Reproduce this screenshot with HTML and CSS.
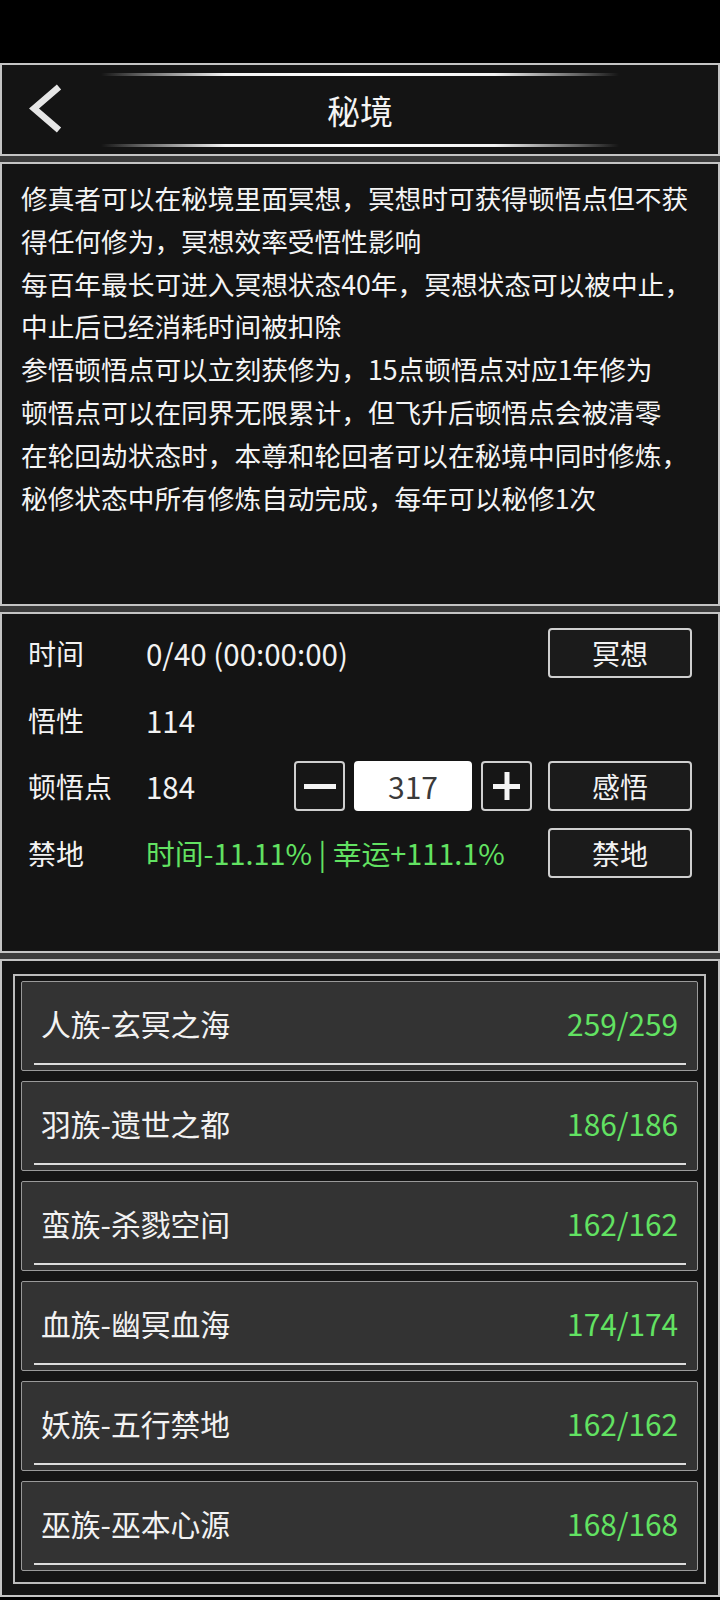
FILE: index.html
```html
<!DOCTYPE html>
<html lang="zh-CN">
<head>
<meta charset="utf-8">
<title>秘境</title>
<link rel="stylesheet" href="styles.css">
</head>
<body>
<div class="topbar"></div>
<div class="stack">
  <header class="panel header">
    <div class="deco"></div>
    <div class="title-row">
      <div class="back">
        <svg width="40" height="54" viewBox="0 0 40 54"><polyline points="30,4 5,25.5 30,47" fill="none" stroke="#e6e6e6" stroke-width="6.5" stroke-linejoin="miter"/></svg>
      </div>
      <div class="title">秘境</div>
      <div></div>
    </div>
    <div class="deco"></div>
  </header>

  <section class="panel intro">
    <p>修真者可以在秘境里面冥想，冥想时可获得顿悟点但不获得任何修为，冥想效率受悟性影响</p>
    <p>每百年最长可进入冥想状态40年，冥想状态可以被中止，中止后已经消耗时间被扣除</p>
    <p>参悟顿悟点可以立刻获修为，15点顿悟点对应1年修为</p>
    <p>顿悟点可以在同界无限累计，但飞升后顿悟点会被清零</p>
    <p>在轮回劫状态时，本尊和轮回者可以在秘境中同时修炼，秘修状态中所有修炼自动完成，每年可以秘修1次</p>
  </section>

  <section class="panel stats">
    <div class="row">
      <span class="label">时间</span>
      <span class="value">0/40 (00:00:00)</span>
      <button class="btn">冥想</button>
    </div>
    <div class="row">
      <span class="label">悟性</span>
      <span class="value">114</span>
    </div>
    <div class="row">
      <span class="label">顿悟点</span>
      <span class="value">184</span>
      <div class="stepper">
        <button class="step minus" aria-label="减少"><span class="bar-h"></span></button>
        <div class="num">317</div>
        <button class="step plus" aria-label="增加"><span class="bar-h"></span><span class="bar-v"></span></button>
      </div>
      <button class="btn">感悟</button>
    </div>
    <div class="row">
      <span class="label">禁地</span>
      <span class="value green">时间-11.11% | 幸运+111.1%</span>
      <button class="btn">禁地</button>
    </div>
  </section>

  <section class="panel realms">
    <div class="frame">
      <div class="item"><div class="item-row"><span>人族-玄冥之海</span><span class="count">259/259</span></div><div class="uline"></div></div>
      <div class="item"><div class="item-row"><span>羽族-遗世之都</span><span class="count">186/186</span></div><div class="uline"></div></div>
      <div class="item"><div class="item-row"><span>蛮族-杀戮空间</span><span class="count">162/162</span></div><div class="uline"></div></div>
      <div class="item"><div class="item-row"><span>血族-幽冥血海</span><span class="count">174/174</span></div><div class="uline"></div></div>
      <div class="item"><div class="item-row"><span>妖族-五行禁地</span><span class="count">162/162</span></div><div class="uline"></div></div>
      <div class="item"><div class="item-row"><span>巫族-巫本心源</span><span class="count">168/168</span></div><div class="uline"></div></div>
    </div>
  </section>
</div>
</body>
</html>
```

FILE: styles.css
```css
* { box-sizing: border-box; }

html, body {
  margin: 0;
  padding: 0;
  background: #000;
}

body {
  width: 720px;
  font-family: "Noto Sans CJK SC", "Noto Sans", sans-serif;
  color: #f2f2f2;
}

.topbar {
  height: 63px;
  background: #000;
}

.stack {
  display: flex;
  flex-direction: column;
  gap: 6px;
  background: #3b3b3b;
}

.panel {
  border: 2px solid #c4c4c4;
  background: #141414;
}

/* header */
.header {
  height: 93px;
  display: flex;
  flex-direction: column;
  align-items: center;
  padding: 8px 0 7px;
}

.deco {
  width: 518px;
  height: 3px;
  flex: none;
  background: linear-gradient(90deg,
    rgba(255,255,255,0) 0%,
    rgba(255,255,255,0.35) 8%,
    rgba(255,255,255,0.95) 24%,
    #ffffff 50%,
    rgba(255,255,255,0.95) 76%,
    rgba(255,255,255,0.35) 92%,
    rgba(255,255,255,0) 100%);
}

.title-row {
  flex: 1;
  width: 100%;
  display: grid;
  grid-template-columns: 1fr auto 1fr;
  align-items: center;
}

.back {
  padding-left: 27px;
  display: flex;
  align-items: center;
}

.back svg { display: block; }

.title {
  font-size: 33px;
  line-height: 1;
  color: #f4f4f4;
}

/* intro text */
.intro {
  height: 444px;
  padding: 13px 16px 0 19px;
}

.intro p {
  margin: 0;
  font-size: 26.7px;
  line-height: 42.8px;
  color: #f4f4f4;
}

/* stats */
.stats {
  height: 341px;
  padding: 14px 26px 0 26px;
  display: flex;
  flex-direction: column;
  gap: 16.5px;
}

.row {
  height: 50px;
  display: flex;
  align-items: center;
  font-size: 28px;
}

.label {
  width: 118px;
  flex: none;
  color: #f2f2f2;
}

.value {
  flex: 1;
  font-size: 29.5px;
  color: #f2f2f2;
  white-space: nowrap;
}

.value.green {
  font-size: 28.8px;
  color: #62e262;
}

.btn {
  width: 144px;
  height: 50px;
  flex: none;
  border: 2px solid #cfcfcf;
  border-radius: 4px;
  background: #1b1b1b;
  color: #f2f2f2;
  font-family: inherit;
  font-size: 28px;
  line-height: 1;
  padding: 0;
}

.stepper {
  display: flex;
  align-items: center;
  gap: 9px;
  margin-right: 16px;
}

.step {
  position: relative;
  width: 51px;
  height: 50px;
  border: 2px solid #cfcfcf;
  border-radius: 4px;
  background: #161616;
  padding: 0;
  display: flex;
  align-items: center;
  justify-content: center;
}

.minus .bar-h {
  width: 32px;
  height: 5px;
  background: #f4f4f4;
}

.plus .bar-h {
  width: 27px;
  height: 5px;
  background: #f4f4f4;
}

.plus .bar-v {
  position: absolute;
  left: 50%;
  top: 50%;
  width: 5px;
  height: 28px;
  transform: translate(-50%, -50%);
  background: #f4f4f4;
}

.num {
  width: 118px;
  height: 50px;
  border-radius: 4px;
  background: #fff;
  color: #3a3a3a;
  font-size: 30px;
  display: flex;
  align-items: center;
  justify-content: center;
}

/* realms */
.realms {
  height: 638px;
  padding: 13px 12px 11px 11px;
}

.frame {
  height: 100%;
  border: 2px solid #bcbcbc;
  background: #151515;
  padding: 5px 6px 11px 6px;
  display: flex;
  flex-direction: column;
  gap: 10px;
}

.item {
  height: 90px;
  flex: none;
  border: 1px solid #9a9a9a;
  border-radius: 2px;
  background: #333333;
  display: flex;
  flex-direction: column;
}

.item-row {
  flex: 1;
  display: flex;
  align-items: center;
  justify-content: space-between;
  padding: 0 19px;
  font-size: 29.8px;
  color: #f2f2f2;
}

.count { color: #62e262; }

.uline {
  height: 2px;
  margin: 0 11px 5px 12px;
  background: #dcdcdc;
}
```
